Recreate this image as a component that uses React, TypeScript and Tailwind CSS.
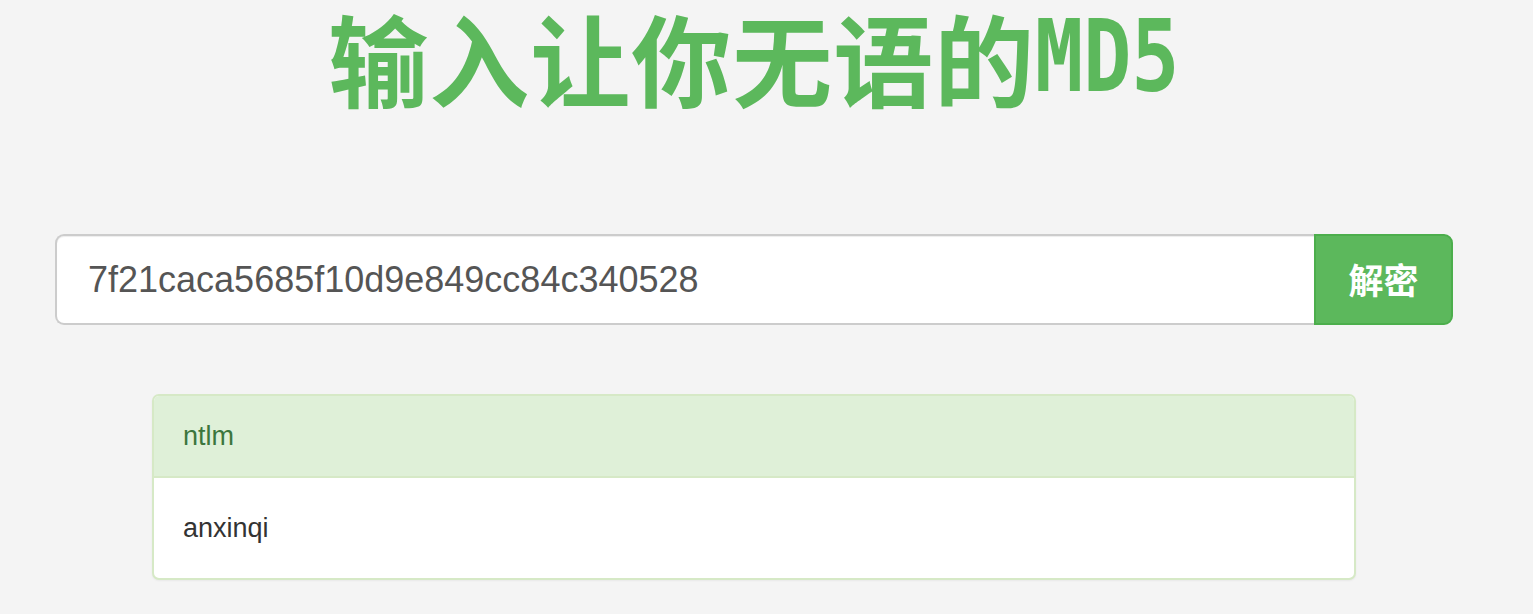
import React from "react";

const sans = "font-['Liberation_Sans','Noto_Sans_CJK_SC',sans-serif]";

export default function App() {
  const hash = "7f21caca5685f10d9e849cc84c340528";

  return (
    <div className={`min-h-[614px] w-full bg-[#f4f4f4] ${sans}`}>
      <div className="pl-[55px] pr-[80px]">
        {/* title */}
        <h1 className="flex justify-center pt-[2px] text-[#5cb85c] leading-[1.1]">
          <span className="font-['Noto_Sans_CJK_SC',sans-serif] text-[100px] font-bold tracking-[1px]">
            输入让你无语的
          </span>
          <span className="inline-block origin-left -mr-[36px] scale-x-[0.8] font-['DejaVu_Sans_Mono',monospace] text-[100px] font-bold">
            MD5
          </span>
        </h1>

        {/* search row */}
        <div className="mt-[122px] flex h-[91px]">
          <input
            readOnly
            value={hash}
            className="h-full flex-1 rounded-l-[9px] border-2 border-r-0 border-[#cccccc] bg-white px-[31px] text-[36px] text-[#555555] shadow-[inset_0_1px_1px_rgba(0,0,0,0.075)] outline-none"
          />
          <button className="h-full w-[139px] rounded-r-[9px] border-2 border-[#4cae4c] bg-[#5cb85c] font-['Noto_Sans_CJK_SC',sans-serif] text-[35px] font-bold text-white">
            解密
          </button>
        </div>

        {/* result panel */}
        <div className="mx-[97px] mt-[69px] overflow-hidden rounded-[7px] border-2 border-[#d6e9c6] bg-white shadow-[0_1px_2px_rgba(0,0,0,0.05)]">
          <div className="flex h-[82px] items-center border-b-2 border-[#d6e9c6] bg-[#dff0d8] px-[29px] text-[27px] text-[#3c763d]">
            ntlm
          </div>
          <div className="flex h-[100px] items-center px-[29px] text-[27px] text-[#333333]">
            anxinqi
          </div>
        </div>
      </div>
    </div>
  );
}
